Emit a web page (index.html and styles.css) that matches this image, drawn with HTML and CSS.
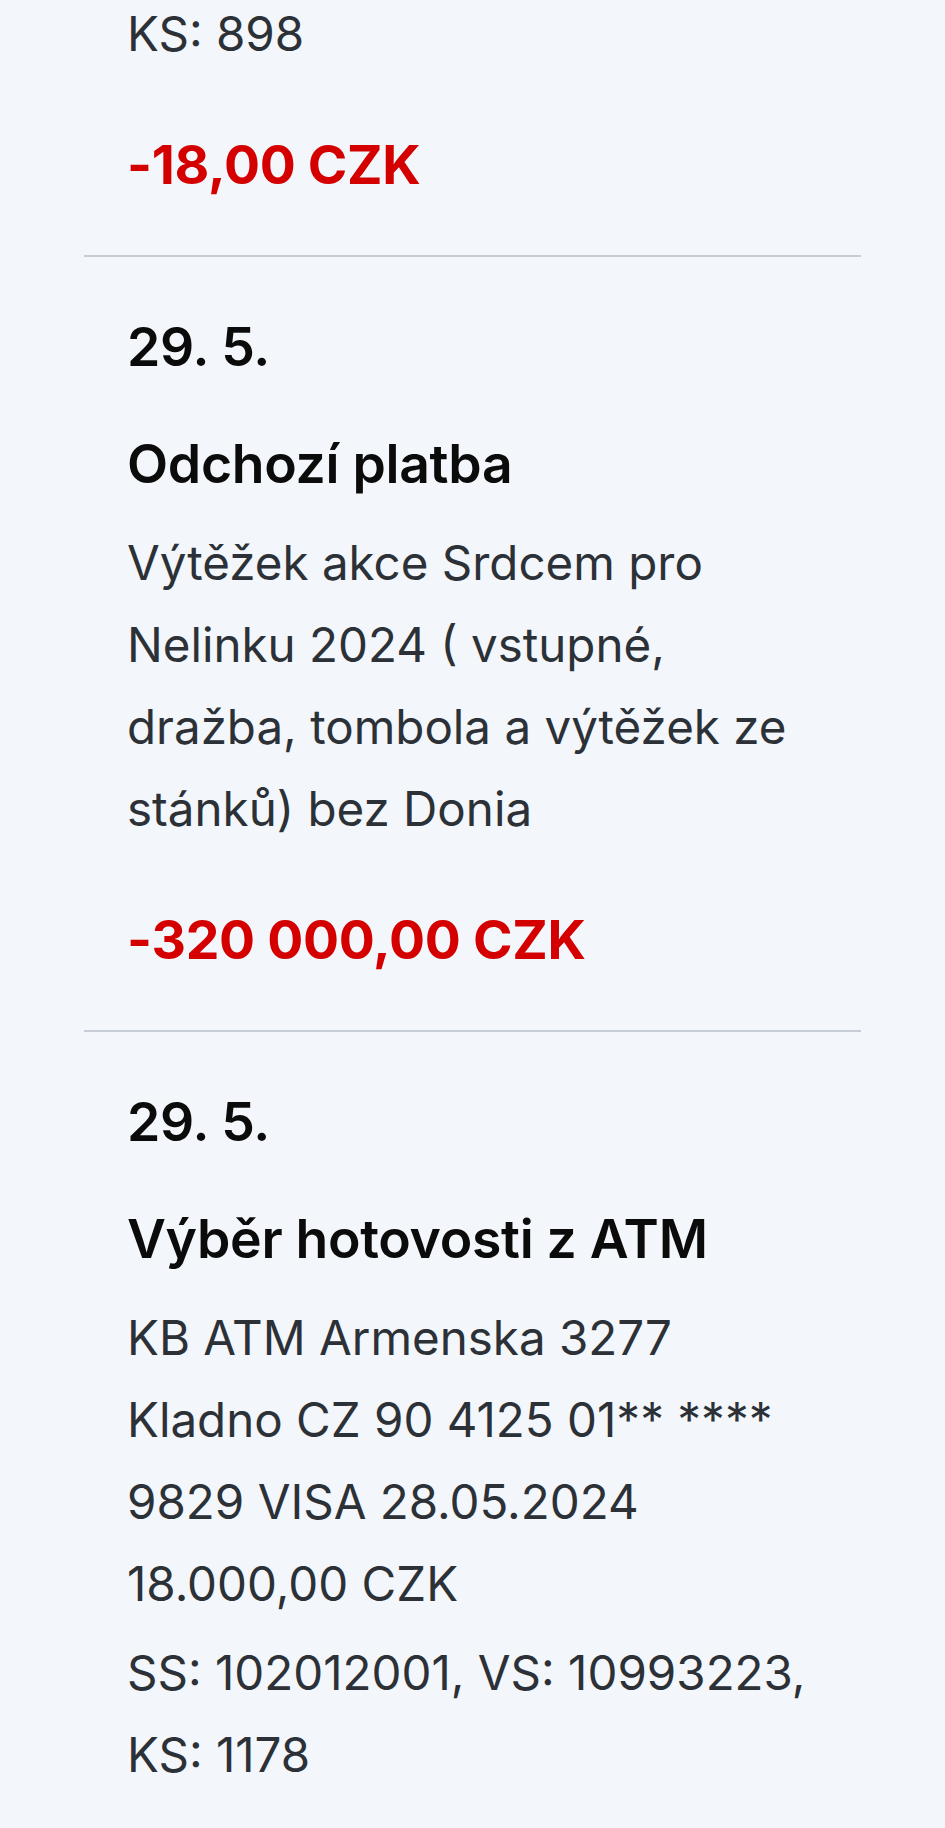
FILE: index.html
```html
<!DOCTYPE html>
<html lang="cs">
<head>
<meta charset="utf-8">
<title>Transakce</title>
<link rel="stylesheet" href="styles.css">
</head>
<body>
<main class="list">
  <section class="tx tx-first">
    <p class="symbols">KS: 898</p>
    <p class="amount">-18,00 CZK</p>
  </section>
  <section class="tx">
    <p class="date">29. 5.</p>
    <h2 class="title">Odchozí platba</h2>
    <p class="desc">Výtěžek akce Srdcem pro Nelinku 2024 ( vstupné, dražba, tombola a výtěžek ze stánků) bez Donia</p>
    <p class="amount">-320 000,00 CZK</p>
  </section>
  <section class="tx tx-last">
    <p class="date">29. 5.</p>
    <h2 class="title">Výběr hotovosti z ATM</h2>
    <p class="desc">KB ATM Armenska 3277 Kladno CZ 90 4125 01** **** 9829 VISA 28.05.2024 18.000,00 CZK</p>
    <p class="symbols">SS: 102012001, VS: 10993223, KS: 1178</p>
  </section>
</main>
</body>
</html>
```
FILE: styles.css
```css
html, body {
  margin: 0;
  padding: 0;
  background: #f3f6fa;
}
body {
  font-family: Inter, "Noto Sans", "Liberation Sans", sans-serif;
  color: #2c3137;
  overflow: hidden;
}
p, h2 {
  margin: 0;
}
.list {
  margin: -68px 84px 0;
}
.tx {
  padding: 54px 45px 54px 43px;
  border-bottom: 2px solid #c6cdd7;
}
.tx-last {
  border-bottom: none;
}
.date, .title, .amount {
  font-size: 53.5px;
  line-height: 71.5px;
  letter-spacing: -0.3px;
}
.date {
  font-weight: 600;
  color: #0b0b0c;
}
.title {
  font-weight: 600;
  color: #0b0b0c;
  margin-top: 46px;
}
.desc, .symbols {
  font-size: 47.5px;
  line-height: 82px;
  font-weight: 400;
}
.desc {
  margin-top: 22.5px;
}
.symbols {
  margin-top: 7px;
}
.amount {
  font-weight: 700;
  color: #d40000;
  margin-top: 54px;
}
```
